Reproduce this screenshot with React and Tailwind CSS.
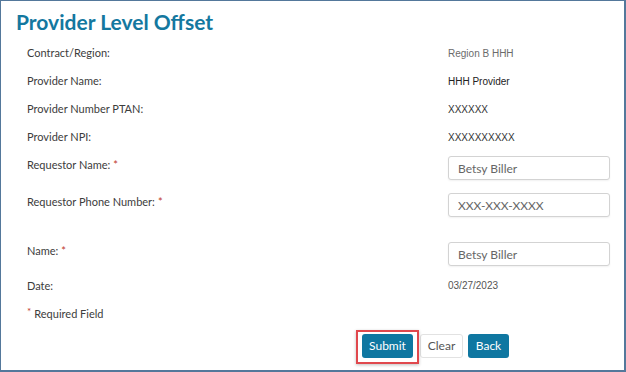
import React from 'react';

const INFO_ROWS = [
  { label: 'Contract/Region:', value: 'Region B HHH', tone: 'text-[#6b6b6b]' },
  { label: 'Provider Name:', value: 'HHH Provider', tone: 'text-[#222]' },
  { label: 'Provider Number PTAN:', value: 'XXXXXX', tone: 'text-[#333]' },
  { label: 'Provider NPI:', value: 'XXXXXXXXXX', tone: 'text-[#333]' },
];

const Req = () => <span className="text-[#c0392b] ml-[3px]">*</span>;

const FieldInput = ({ value }) => (
  <input
    type="text"
    defaultValue={value}
    className="w-[162px] h-[24px] px-[9px] rounded-[3px] border border-[#d3d3d3] bg-white text-[12px] text-[#666] shadow-[0_1px_2px_rgba(0,0,0,0.06)] outline-none"
    style={{ fontFamily: 'Lato, "Liberation Sans", sans-serif' }}
  />
);

const FormRow = ({ label, children, className = '' }) => (
  <div className={`flex items-start ${className}`}>
    <div className="w-[421px] leading-[16px] pt-[1px]">
      {label}
      <Req />
    </div>
    {children}
  </div>
);

export default function App() {
  return (
    <div
      className="w-[626px] h-[372px] overflow-hidden bg-white border-l border-t border-r-2 border-b-2 border-[#54789b] flex flex-col text-[11px] text-[#3c3c3c]"
      style={{ fontFamily: 'Lato, "Open Sans", sans-serif' }}
    >
      {/* ===== TITLE ===== */}
      <h1 className="pl-[15px] pt-[7px] text-[21px] leading-[28px] font-bold text-[#14789f]">
        Provider Level Offset
      </h1>

      <div className="pl-[26px] flex flex-col">
        {/* read-only info */}
        <div className="mt-[3px]">
          {INFO_ROWS.map((row) => (
            <div key={row.label} className="flex items-center h-[28px]">
              <div className="w-[421px]">{row.label}</div>
              <div
                className={`text-[10px] ${row.tone}`}
                style={{ fontFamily: '"Liberation Sans", Arial, sans-serif' }}
              >
                {row.value}
              </div>
            </div>
          ))}
        </div>

        {/* editable fields */}
        <FormRow label="Requestor Name:" className="mt-[5px]">
          <FieldInput value="Betsy Biller" />
        </FormRow>
        <FormRow label="Requestor Phone Number:" className="mt-[13px]">
          <FieldInput value="XXX-XXX-XXXX" />
        </FormRow>
        <FormRow label="Name:" className="mt-[25px]">
          <FieldInput value="Betsy Biller" />
        </FormRow>

        <div className="flex items-center h-[24px] mt-[8px]">
          <div className="w-[421px]">Date:</div>
          <div
            className="text-[10px] text-[#555] -mt-[2px]"
            style={{ fontFamily: '"Liberation Sans", Arial, sans-serif' }}
          >
            03/27/2023
          </div>
        </div>

        <div className="flex items-start h-[16px] mt-[8px] leading-[16px]">
          <span className="text-[#c0392b] text-[10px] leading-[10px] mr-[3px]">*</span>
          <span>Required Field</span>
        </div>
      </div>

      {/* ===== BUTTONS ===== */}
      <div className="flex items-center ml-[361px] mt-[12px]">
        <div className="relative">
          <button className="w-[51px] h-[24px] rounded-[3px] bg-[#0f77a1] text-white text-[12px] flex items-center justify-center">
            Submit
          </button>
          <div className="absolute -left-[6px] -right-[6px] -top-[4px] -bottom-[6px] border-2 border-[#e0484d] shadow-[0_1px_3px_rgba(0,0,0,0.25)] pointer-events-none" />
        </div>
        <button className="ml-[7px] w-[43px] h-[24px] rounded-[3px] bg-white border border-[#e2e2e2] text-[#555] text-[12px] flex items-center justify-center">
          Clear
        </button>
        <button className="ml-[5px] w-[41px] h-[24px] rounded-[3px] bg-[#0f77a1] text-white text-[12px] flex items-center justify-center">
          Back
        </button>
      </div>
    </div>
  );
}
